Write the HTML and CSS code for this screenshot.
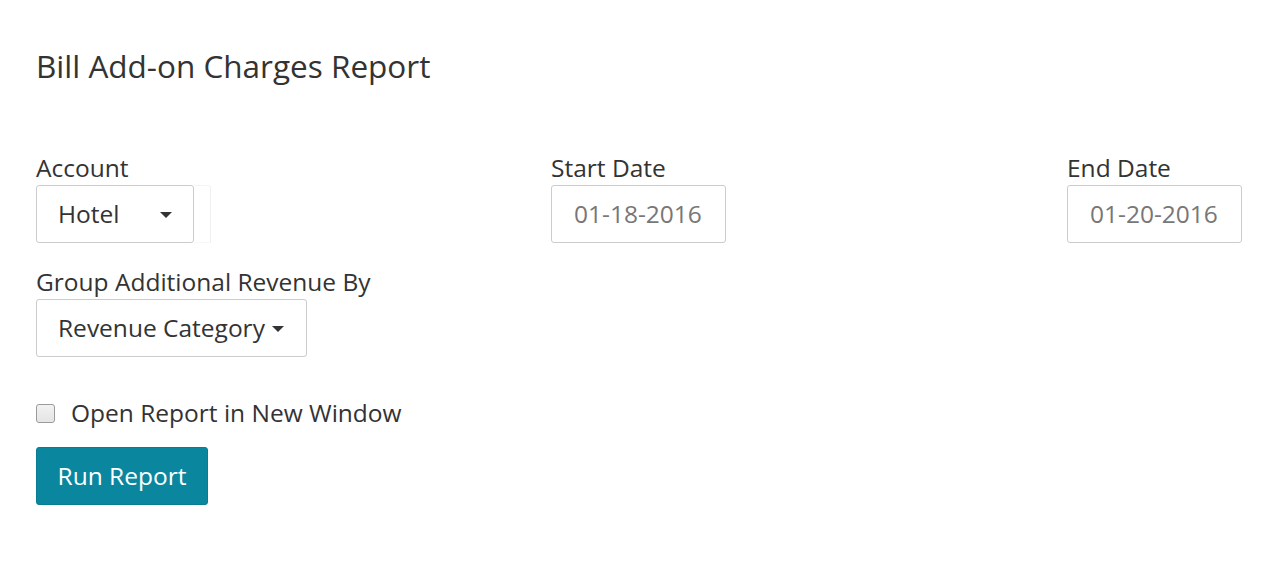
FILE: index.html
```html
<!DOCTYPE html>
<html>
<head>
<meta charset="utf-8">
<link rel="stylesheet" href="styles.css">
</head>
<body>
<div class="page">
  <h1 class="title">Bill Add-on Charges Report</h1>
  <div class="row">
    <div class="field">
      <label class="label">Account</label>
      <div class="select-wrap">
        <div class="select select-account"><span>Hotel</span><span class="caret"></span></div>
        <div class="ghost"></div>
      </div>
    </div>
    <div class="field">
      <label class="label">Start Date</label>
      <div class="date">01-18-2016</div>
    </div>
    <div class="field">
      <label class="label">End Date</label>
      <div class="date">01-20-2016</div>
    </div>
  </div>
  <div class="field group-field">
    <label class="label">Group Additional Revenue By</label>
    <div class="select select-group"><span>Revenue Category</span><span class="caret"></span></div>
  </div>
  <div class="check-row">
    <span class="checkbox"></span>
    <span class="check-label">Open Report in New Window</span>
  </div>
  <button class="btn">Run Report</button>
</div>
</body>
</html>
```
FILE: styles.css
```css
html, body {
  margin: 0;
  padding: 0;
  background: #fff;
}
body {
  font-family: "Open Sans", "Liberation Sans", sans-serif;
  color: #333;
}
.page {
  padding: 49px 0 0 36px;
}
.title {
  margin: 0;
  font-size: 31.5px;
  font-weight: 400;
  line-height: 34px;
  color: #333;
}
.row {
  display: grid;
  grid-template-columns: 515px 516px 176px;
  margin-top: 69px;
}
.field {
  display: flex;
  flex-direction: column;
  align-items: flex-start;
}
.label {
  font-size: 24.5px;
  line-height: 32px;
  margin-bottom: 1px;
}
.select-wrap {
  display: flex;
}
.select {
  box-sizing: border-box;
  height: 58px;
  border: 1px solid #ccc;
  border-radius: 3px;
  display: flex;
  align-items: center;
  font-size: 24.5px;
  color: #333;
  background: #fff;
  padding-bottom: 2px;
}
.select-account {
  width: 158px;
  padding-left: 21px;
  padding-right: 21px;
  justify-content: space-between;
}
.ghost {
  box-sizing: border-box;
  width: 17px;
  height: 58px;
  border-top: 1px solid #f4f4f4;
  border-right: 1px solid #f0f0f0;
  border-bottom: 1px solid #f7f7f7;
  border-top-right-radius: 3px;
}
.caret {
  width: 0;
  height: 0;
  border-left: 6px solid transparent;
  border-right: 6px solid transparent;
  border-top: 6px solid #333;
  margin-top: 4px;
}
.date {
  box-sizing: border-box;
  height: 58px;
  width: 175px;
  border: 1px solid #ccc;
  border-radius: 3px;
  display: flex;
  align-items: center;
  padding-left: 22px;
  padding-bottom: 1px;
  font-size: 24.5px;
  color: #777;
}
.group-field {
  margin-top: 23px;
}
.select-group {
  width: 271px;
  padding-left: 21px;
}
.select-group .caret {
  margin-left: 7px;
}
.check-row {
  display: flex;
  align-items: center;
  margin-top: 40px;
  height: 32px;
}
.checkbox {
  box-sizing: border-box;
  width: 19px;
  height: 19px;
  border: 1px solid #9a9a9a;
  border-radius: 3px;
  background: linear-gradient(#f2f2f2, #e4e4e4);
  box-shadow: inset 0 0 1px #fff;
}
.check-label {
  margin-left: 16px;
  font-size: 24.5px;
  line-height: 32px;
}
.btn {
  margin-top: 18px;
  display: block;
  box-sizing: border-box;
  width: 172px;
  height: 58px;
  border: 1px solid #087c93;
  border-radius: 3px;
  background: #0a879f;
  color: #fff;
  font-family: "Open Sans", "Liberation Sans", sans-serif;
  font-size: 24.5px;
  padding: 0 0 1px 0;
}
```
